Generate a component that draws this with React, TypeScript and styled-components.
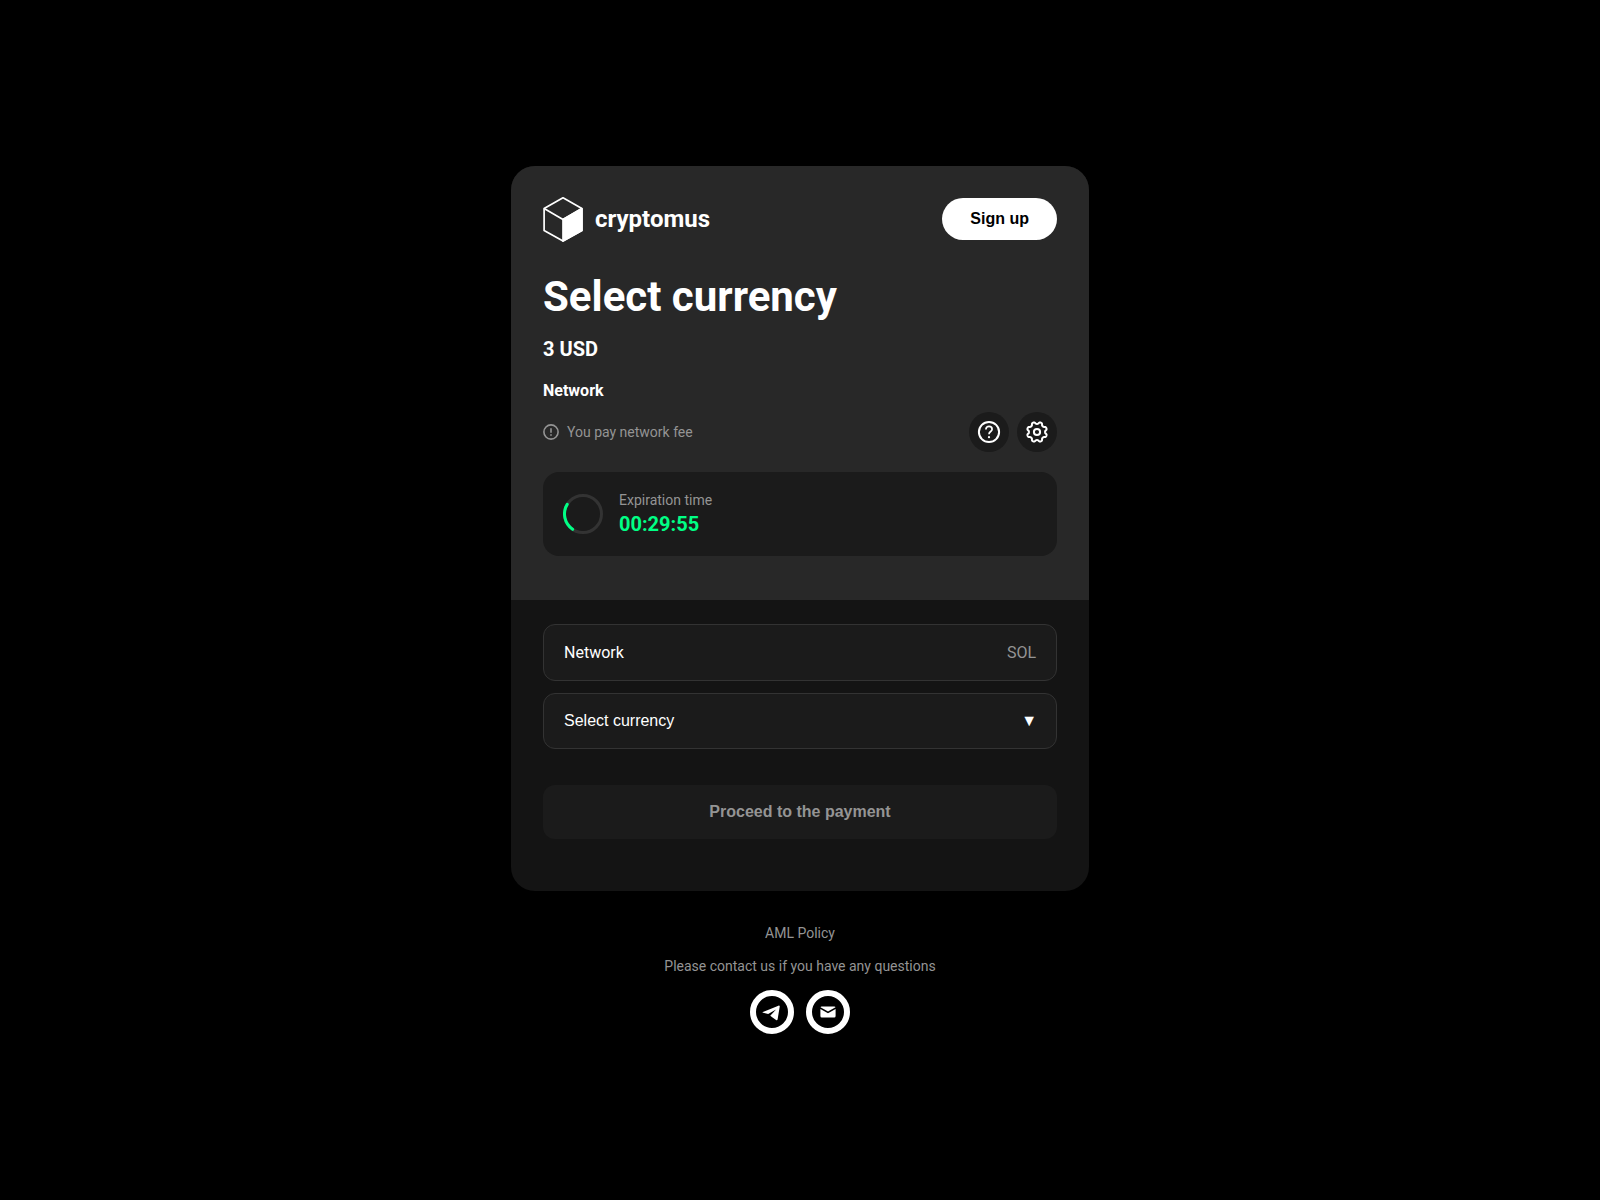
import React, { useState } from "react";
import styled, { createGlobalStyle } from "styled-components";

const GlobalStyle = createGlobalStyle`
  * { box-sizing: border-box; }
  body {
    margin: 0;
    background: #000;
    color: #fff;
    font-family: Roboto, "Liberation Sans", sans-serif;
  }
`;

const Page = styled.div`
  min-height: 100vh;
  display: flex;
  flex-direction: column;
  align-items: center;
  justify-content: center;
`;

const Card = styled.main`
  width: 100%;
  max-width: 578px;
  border-radius: 24px;
  overflow: hidden;
  background: #141414;
`;

const Summary = styled.section`
  padding: 32px 32px 44px;
  background: #282828;
`;

const Header = styled.header`
  height: 42px;
  display: flex;
  align-items: center;
  justify-content: space-between;
`;

const Brand = styled.a`
  display: flex;
  align-items: center;
  gap: 12px;
  color: #fff;
  font-size: 24px;
  font-weight: 700;
  text-decoration: none;
`;

const SignUpButton = styled.button`
  border: 0;
  border-radius: 24px;
  padding: 12px 28px;
  background: #fff;
  color: #000;
  font: 700 16px "Liberation Sans", Arial, sans-serif;
  cursor: pointer;
`;

const Title = styled.h1`
  margin: 32px 0 16px;
  font-size: 42px;
  line-height: 49px;
  font-weight: 700;
`;

const Amount = styled.p`
  margin: 0;
  font-size: 20px;
  line-height: 24px;
  font-weight: 700;
`;

const Caption = styled.h2`
  margin: 20px 0 12px;
  font-size: 16px;
  line-height: 19px;
  font-weight: 700;
`;

const FeeRow = styled.div`
  display: flex;
  align-items: center;
  justify-content: space-between;
`;

const FeeNote = styled.span`
  display: flex;
  align-items: center;
  gap: 8px;
  color: #949494;
  font-size: 14px;
  line-height: 16px;
`;

const Actions = styled.div`
  display: flex;
  gap: 8px;
`;

const RoundButton = styled.button`
  width: 40px;
  height: 40px;
  display: flex;
  align-items: center;
  justify-content: center;
  padding: 0;
  border: 0;
  border-radius: 50%;
  background: #1b1b1b;
  color: #fff;
  cursor: pointer;
`;

const Expiration = styled.div`
  display: flex;
  align-items: center;
  gap: 16px;
  margin-top: 20px;
  padding: 20px;
  border-radius: 16px;
  background: #1b1b1b;
`;

const ExpirationText = styled.div`
  display: flex;
  flex-direction: column;
  gap: 4px;
`;

const ExpirationLabel = styled.span`
  color: #949494;
  font-size: 14px;
  line-height: 16px;
`;

const Timer = styled.span`
  color: #00ff85;
  font-size: 20px;
  line-height: 24px;
  font-weight: 700;
`;

const Form = styled.form`
  display: flex;
  flex-direction: column;
  padding: 24px 32px 52px;
`;

const Field = styled.div`
  display: flex;
  justify-content: space-between;
  margin-bottom: 12px;
  padding: 18px 20px;
  border: 1px solid #333;
  border-radius: 12px;
  background: #1b1b1b;
  font-size: 16px;
  line-height: 19px;
`;

const FieldValue = styled.span`
  color: #949494;
`;

const SelectWrap = styled.div`
  position: relative;
  margin-bottom: 36px;
`;

const CurrencySelect = styled.select`
  display: block;
  width: 100%;
  appearance: none;
  padding: 18px 20px;
  border: 1px solid #333;
  border-radius: 12px;
  background: #1b1b1b;
  color: #fff;
  font: 16px/18px "Liberation Sans", Arial, sans-serif;
  cursor: pointer;
`;

const Arrow = styled.span`
  position: absolute;
  top: 0;
  right: 20px;
  bottom: 0;
  display: flex;
  align-items: center;
  font: 16px "Liberation Sans", "DejaVu Sans", sans-serif;
  pointer-events: none;
`;

const ProceedButton = styled.button`
  padding: 18px;
  border: 0;
  border-radius: 12px;
  background: #1b1b1b;
  color: #949494;
  font: 700 16px "Liberation Sans", Arial, sans-serif;
`;

const Footer = styled.footer`
  display: flex;
  flex-direction: column;
  align-items: center;
  gap: 16px;
  padding-top: 34px;
  color: #949494;
  font-size: 14px;
  line-height: 16px;
`;

const PolicyLink = styled.a`
  color: inherit;
  line-height: 17px;
  text-decoration: none;
`;

const Contacts = styled.div`
  display: flex;
  gap: 12px;
`;

const ContactLink = styled.a`
  width: 44px;
  height: 44px;
  display: flex;
  align-items: center;
  justify-content: center;
  border: 6px solid #fff;
  border-radius: 50%;
  color: #fff;
`;

const CubeLogo = () => (
  <svg width="40" height="46" viewBox="0 0 40 46" fill="none" stroke="#fff" strokeWidth="1.7" strokeLinejoin="round" aria-hidden="true">
    <path d="M20 1.8 38.9 12.6V34.4L20 45.100 1.100 34.4V12.6Z" />
    <path d="M1.100 12.6 20 23.4 38.9 12.6" />
    <path d="M20 23.4 38.9 12.6V34.4L20 45.1Z" fill="#fff" />
  </svg>
);

const InfoIcon = () => (
  <svg width="16" height="16" viewBox="0 0 16 16" fill="none" stroke="currentColor" strokeWidth="1.6" aria-hidden="true">
    <circle cx="8" cy="8" r="7.1" />
    <path d="M8 4.2v4.6M8 10.3v1.5" strokeWidth="1.6" />
  </svg>
);

const HelpIcon = () => (
  <svg width="24" height="24" viewBox="0 0 24 24" fill="none" stroke="currentColor" strokeWidth="2" aria-hidden="true">
    <circle cx="12" cy="12" r="10.1" />
    <path d="M8.9 9.4c0-1.8 1.4-3 3.1-3s3.1 1.2 3.1 2.9c0 2.2-3.1 2.3-3.1 4.9" strokeWidth="1.7" />
    <circle cx="12" cy="17.2" r="1.1" fill="currentColor" stroke="none" />
  </svg>
);

const gearPath = (() => {
  const steps = 160;
  const points: string[] = [];
  for (let i = 0; i < steps; i += 1) {
    const angle = (i / steps) * Math.PI * 2;
    const wave = Math.tanh(-1.8 * Math.cos(8 * angle)) / Math.tanh(1.8);
    const radius = 9.1 + wave;
    points.push(`${(12 + radius * Math.cos(angle)).toFixed(2)} ${(12 + radius * Math.sin(angle)).toFixed(2)}`);
  }
  return `M${points.join("L")}Z`;
})();

const GearIcon = () => (
  <svg width="24" height="24" viewBox="0 0 24 24" fill="none" stroke="currentColor" strokeWidth="2" strokeLinejoin="round" aria-hidden="true">
    <path d={gearPath} />
    <circle cx="12" cy="12" r="3.1" />
  </svg>
);

const Spinner = () => (
  <svg width="40" height="40" viewBox="0 0 40 40" fill="none" strokeWidth="3" aria-hidden="true">
    <circle cx="20" cy="20" r="18.5" stroke="#333" />
    <path d="M4.2 10.4A18.5 18.5 0 0 0 9.6 35.3" stroke="#00ff85" strokeLinecap="round" />
  </svg>
);

const TelegramIcon = () => (
  <svg width="20" height="20" viewBox="0.4 0.2 19.2 19.2" fill="currentColor" aria-hidden="true">
    <path d="M1.3 9.8 16.2 3.7c.8-.3 1.4.1 1.2 1.1l-2 12c-.2.9-.8 1.1-1.5.6L8.3 13.5 13.9 7.5 6.3 11.6 1.5 10.6C.8 10.4.8 10 1.3 9.8Z" />
  </svg>
);

const MailIcon = () => (
  <svg width="16" height="16" viewBox="0 0 16 16" fill="currentColor" aria-hidden="true">
    <path d="M1.6 2.5H14.4Q15.3 2.5 15.5 3.3L8 7.6.5 3.3Q.7 2.5 1.6 2.5Z" />
    <path d="M.4 5 8 9.2 15.6 5V12Q15.6 13.5 14.2 13.5H1.8Q.4 13.5.4 12Z" />
  </svg>
);

export default function App() {
  const [currency, setCurrency] = useState("");

  return (
    <>
      <GlobalStyle />
      <Page>
        <Card>
          <Summary>
            <Header>
              <Brand href="#">
                <CubeLogo />
                cryptomus
              </Brand>
              <SignUpButton type="button">Sign up</SignUpButton>
            </Header>
            <Title>Select currency</Title>
            <Amount>3 USD</Amount>
            <Caption>Network</Caption>
            <FeeRow>
              <FeeNote>
                <InfoIcon />
                You pay network fee
              </FeeNote>
              <Actions>
                <RoundButton type="button" aria-label="Help">
                  <HelpIcon />
                </RoundButton>
                <RoundButton type="button" aria-label="Settings">
                  <GearIcon />
                </RoundButton>
              </Actions>
            </FeeRow>
            <Expiration>
              <Spinner />
              <ExpirationText>
                <ExpirationLabel>Expiration time</ExpirationLabel>
                <Timer role="timer">00:29:55</Timer>
              </ExpirationText>
            </Expiration>
          </Summary>
          <Form onSubmit={(event) => event.preventDefault()}>
            <Field>
              <span>Network</span>
              <FieldValue>SOL</FieldValue>
            </Field>
            <SelectWrap>
              <CurrencySelect
                aria-label="Select currency"
                value={currency}
                onChange={(event) => setCurrency(event.target.value)}
              >
                <option value="">Select currency</option>
              </CurrencySelect>
              <Arrow aria-hidden="true">▼</Arrow>
            </SelectWrap>
            <ProceedButton type="submit" disabled={!currency}>
              Proceed to the payment
            </ProceedButton>
          </Form>
        </Card>
        <Footer>
          <PolicyLink href="#">AML Policy</PolicyLink>
          <span>Please contact us if you have any questions</span>
          <Contacts>
            <ContactLink href="#" aria-label="Telegram">
              <TelegramIcon />
            </ContactLink>
            <ContactLink href="#" aria-label="Email">
              <MailIcon />
            </ContactLink>
          </Contacts>
        </Footer>
      </Page>
    </>
  );
}
